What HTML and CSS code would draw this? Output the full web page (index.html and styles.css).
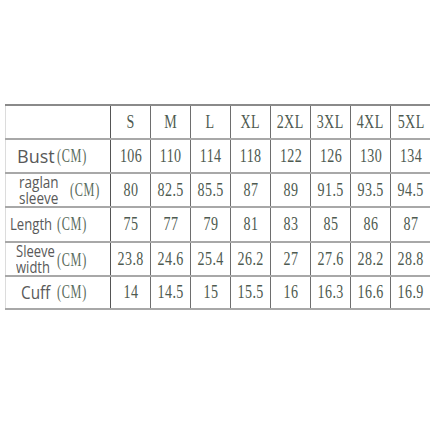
FILE: index.html
```html
<!DOCTYPE html>
<html>
<head>
<meta charset="utf-8">
<link rel="stylesheet" href="styles.css">
</head>
<body>
<div class="page">
<table class="size">
  <colgroup>
    <col class="c-lab">
    <col class="c-n"><col class="c-n"><col class="c-n"><col class="c-n">
    <col class="c-n"><col class="c-n"><col class="c-n"><col class="c-n">
  </colgroup>
  <tr class="r1">
    <td class="lab"></td>
    <td><span class="n">S</span></td>
    <td><span class="n">M</span></td>
    <td><span class="n">L</span></td>
    <td><span class="n">XL</span></td>
    <td><span class="n">2XL</span></td>
    <td><span class="n">3XL</span></td>
    <td><span class="n">4XL</span></td>
    <td><span class="n">5XL</span></td>
  </tr>
  <tr class="r2">
    <td class="lab"><div class="lw"><span class="t t-bust">Bust</span><span class="cm">(CM)</span></div></td>
    <td><span class="n">106</span></td>
    <td><span class="n">110</span></td>
    <td><span class="n">114</span></td>
    <td><span class="n">118</span></td>
    <td><span class="n">122</span></td>
    <td><span class="n">126</span></td>
    <td><span class="n">130</span></td>
    <td><span class="n">134</span></td>
  </tr>
  <tr class="r3">
    <td class="lab"><div class="lw"><span class="t t-rag">raglan<br>sleeve</span><span class="cm cm-rag">(CM)</span></div></td>
    <td><span class="n">80</span></td>
    <td><span class="n">82.5</span></td>
    <td><span class="n">85.5</span></td>
    <td><span class="n">87</span></td>
    <td><span class="n">89</span></td>
    <td><span class="n">91.5</span></td>
    <td><span class="n">93.5</span></td>
    <td><span class="n">94.5</span></td>
  </tr>
  <tr class="r4">
    <td class="lab"><div class="lw"><span class="t t-len">Length</span><span class="cm">(CM)</span></div></td>
    <td><span class="n">75</span></td>
    <td><span class="n">77</span></td>
    <td><span class="n">79</span></td>
    <td><span class="n">81</span></td>
    <td><span class="n">83</span></td>
    <td><span class="n">85</span></td>
    <td><span class="n">86</span></td>
    <td><span class="n">87</span></td>
  </tr>
  <tr class="r5">
    <td class="lab"><div class="lw"><span class="t t-sw">Sleeve<br>width</span><span class="cm cm-sw">(CM)</span></div></td>
    <td><span class="n">23.8</span></td>
    <td><span class="n">24.6</span></td>
    <td><span class="n">25.4</span></td>
    <td><span class="n">26.2</span></td>
    <td><span class="n">27</span></td>
    <td><span class="n">27.6</span></td>
    <td><span class="n">28.2</span></td>
    <td><span class="n">28.8</span></td>
  </tr>
  <tr class="r6">
    <td class="lab"><div class="lw"><span class="t t-cuff">Cuff</span><span class="cm">(CM)</span></div></td>
    <td><span class="n">14</span></td>
    <td><span class="n">14.5</span></td>
    <td><span class="n">15</span></td>
    <td><span class="n">15.5</span></td>
    <td><span class="n">16</span></td>
    <td><span class="n">16.3</span></td>
    <td><span class="n">16.6</span></td>
    <td><span class="n">16.9</span></td>
  </tr>
</table>
</div>
</body>
</html>
```
FILE: styles.css
```css
html, body {
  margin: 0;
  padding: 0;
  background: #ffffff;
}
.page {
  width: 430px;
  height: 430px;
  padding-top: 104px;
  padding-left: 5px;
  box-sizing: border-box;
  overflow: hidden;
}
.size {
  border-collapse: collapse;
  table-layout: fixed;
  width: 425px;
}
.c-lab { width: 105px; }
.c-n { width: 40px; }
.size td {
  padding: 0;
  border-left: 1px solid #6e6e6e;
  border-top: 2px solid #a8a8a8;
  border-bottom: 2px solid #a8a8a8;
  text-align: center;
  vertical-align: middle;
  color: #4e5a50;
  overflow: hidden;
}
.size td.lab {
  border-left: 1px solid #dcdcdc;
  border-right: 1px solid #555;
  text-align: left;
  overflow: visible;
}
.size tr.r1 td { border-top: 2px solid #8a8a8a; }
.r1 td { height: 31.5px; }
.r2 td { height: 32.5px; }
.r3 td { height: 31.5px; }
.r4 td { height: 32.5px; }
.r5 td { height: 31.5px; }
.r6 td { height: 31.5px; }
.n {
  display: inline-block;
  font-family: "Liberation Serif", serif;
  font-size: 19px;
  letter-spacing: 0.5px;
  transform: scaleX(0.74);
  white-space: nowrap;
  line-height: 20px;
}
.lw {
  display: flex;
  align-items: center;
  height: 100%;
}
.t {
  display: inline-block;
  font-family: "Open Sans", "Noto Sans", sans-serif;
  color: #595959;
  white-space: nowrap;
  transform-origin: left center;
  flex: none;
}
.t-bust { font-size: 18px; margin-left: 11px; }
.t-rag { font-size: 16.5px; margin-left: 13px; margin-right: -9px; line-height: 16px; transform: scaleX(0.82); }
.t-len { font-size: 16px; margin-left: 4px; margin-right: -9px; transform: scaleX(0.82); }
.t-sw { font-size: 15.5px; margin-left: 10px; margin-right: -7px; line-height: 16px; transform: scaleX(0.84); }
.t-cuff { font-size: 18px; margin-left: 15px; margin-right: -5px; transform: scaleX(0.85); }
.cm {
  display: inline-block;
  flex: 0 0 30px;
  width: 30px;
  font-family: "Liberation Serif", serif;
  font-size: 18px;
  line-height: 20px;
  color: #5a6b5c;
  letter-spacing: 1px;
  transform: scaleX(0.68);
  transform-origin: left center;
  margin-left: auto;
  margin-right: 23px;
  white-space: nowrap;
}
.cm-rag { margin-right: 10px; }
.cm-sw { position: relative; top: 1px; }
```
